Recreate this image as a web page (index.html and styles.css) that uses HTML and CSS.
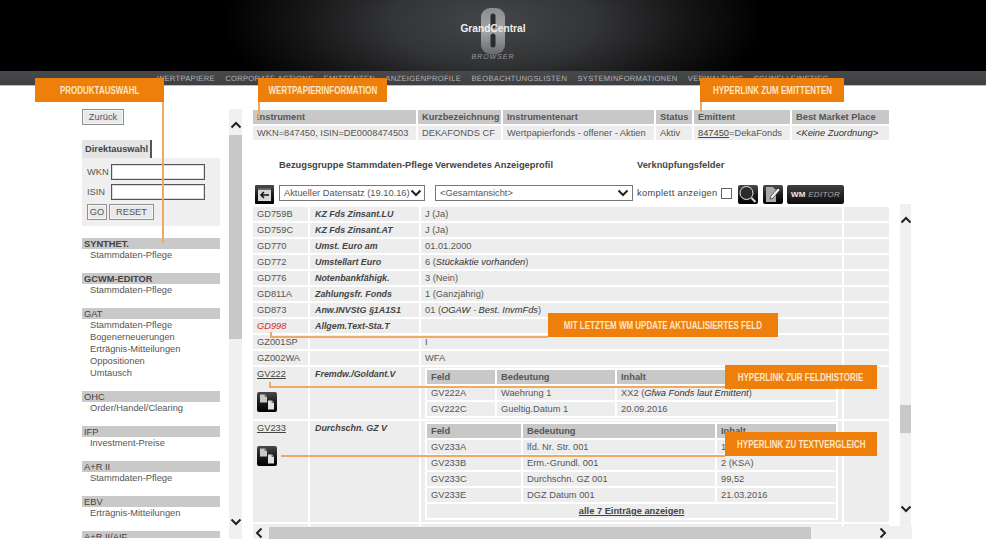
FILE: index.html
```html
<!DOCTYPE html>
<html lang="en">

<head>
  <meta charset="UTF-8">
  <title>GrandCentral Browser</title>
  <link rel="stylesheet" href="styles.css">
</head>

<body>

  <svg class="sprites" width="0" height="0">
    <defs>
      <linearGradient id="tile" x1="0" y1="0" x2="0" y2="1">
        <stop offset="0" stop-color="#4a4a4a" />
        <stop offset="0.5" stop-color="#1c1c1c" />
        <stop offset="1" stop-color="#000" />
      </linearGradient>
      <linearGradient id="mark" x1="0" y1="0" x2="0" y2="1">
        <stop offset="0" stop-color="#8c8d90" />
        <stop offset="0.5" stop-color="#a5a6a8" />
        <stop offset="1" stop-color="#6a6b6e" />
      </linearGradient>
      <symbol id="chevron-up" viewBox="0 0 12 8">
        <path d="M1.5 6.5 6 2l4.500 4.500" fill="none" stroke="#222" stroke-width="2" />
      </symbol>
      <symbol id="chevron-down" viewBox="0 0 12 8">
        <path d="M1.500 1.500 6 6l4.500-4.500" fill="none" stroke="#222" stroke-width="2" />
      </symbol>
      <symbol id="chevron-left" viewBox="0 0 8 12">
        <path d="M6.500 1.500 2 6l4.500 4.500" fill="none" stroke="#222" stroke-width="2" />
      </symbol>
      <symbol id="chevron-right" viewBox="0 0 8 12">
        <path d="M1.500 1.500 6 6l-4.500 4.500" fill="none" stroke="#222" stroke-width="2" />
      </symbol>
      <symbol id="docs" viewBox="0 0 20 20">
        <rect width="20" height="20" rx="2" fill="url(#tile)" />
        <path d="M3 2.500h5l2 2v6H3z" fill="#c9c9c9" />
        <path d="M11 8.500h4l2 2v7h-6z" fill="#e0e0e0" />
        <path d="M8 2.500v2h2M15 8.500v2h2" fill="none" stroke="#666" />
      </symbol>
    </defs>
  </svg>

  <header class="masthead">
    <div class="logo">
      <svg class="logo-mark" width="24" height="46" viewBox="0 0 24 46">
        <rect width="24" height="46" rx="9" fill="url(#mark)" />
        <path d="M12 8v10M12 28v9" stroke="#2b2c2e" stroke-width="5" stroke-linecap="round" />
      </svg>
      <span class="logo-name">GrandCentral</span>
      <span class="logo-sub">BROWSER</span>
    </div>
  </header>

  <nav class="topnav">
    <a>WERTPAPIERE</a>
    <a>CORPORATE ACTIONS</a>
    <a>EMITTENTEN</a>
    <a>ANZEIGENPROFILE</a>
    <a>BEOBACHTUNGSLISTEN</a>
    <a>SYSTEMINFORMATIONEN</a>
    <a>VERWALTUNG</a>
    <a>SCHNELLEINSTIEG</a>
  </nav>

  <main class="workspace">

    <aside class="sidebar">
      <button class="btn btn-back">Zurück</button>

      <div class="tab">Direktauswahl</div>
      <form class="quick">
        <label class="quick-row">WKN <input class="quick-input" type="text"></label>
        <label class="quick-row">ISIN <input class="quick-input" type="text"></label>
        <div class="quick-btns">
          <button class="btn btn-go" type="button">GO</button>
          <button class="btn btn-reset" type="button">RESET</button>
        </div>
      </form>

      <section class="menu">
        <h4 class="menu-head strong">SYNTHET.</h4>
        <a class="menu-item">Stammdaten-Pflege</a>
      </section>
      <section class="menu">
        <h4 class="menu-head strong">GCWM-EDITOR</h4>
        <a class="menu-item">Stammdaten-Pflege</a>
      </section>
      <section class="menu">
        <h4 class="menu-head">GAT</h4>
        <a class="menu-item">Stammdaten-Pflege</a>
        <a class="menu-item">Bogenerneuerungen</a>
        <a class="menu-item">Erträgnis-Mitteilungen</a>
        <a class="menu-item">Oppositionen</a>
        <a class="menu-item">Umtausch</a>
      </section>
      <section class="menu">
        <h4 class="menu-head">OHC</h4>
        <a class="menu-item">Order/Handel/Clearing</a>
      </section>
      <section class="menu">
        <h4 class="menu-head">IFP</h4>
        <a class="menu-item">Investment-Preise</a>
      </section>
      <section class="menu">
        <h4 class="menu-head">A+R II</h4>
        <a class="menu-item">Stammdaten-Pflege</a>
      </section>
      <section class="menu">
        <h4 class="menu-head">EBV</h4>
        <a class="menu-item">Erträgnis-Mitteilungen</a>
      </section>
      <section class="menu">
        <h4 class="menu-head">A+R II/AIF</h4>
      </section>
    </aside>

    <div class="vscroll vscroll-side">
      <svg class="arrow arrow-up" width="12" height="8"><use href="#chevron-up" /></svg>
      <div class="thumb thumb-side"></div>
      <svg class="arrow arrow-down" width="12" height="8"><use href="#chevron-down" /></svg>
    </div>

    <div class="content">

      <table class="grid summary">
        <colgroup>
          <col class="s1"><col class="s2"><col class="s3"><col class="s4"><col class="s5"><col class="s6">
        </colgroup>
        <tr>
          <th>Instrument</th>
          <th>Kurzbezeichnung</th>
          <th>Instrumentenart</th>
          <th>Status</th>
          <th>Emittent</th>
          <th>Best Market Place</th>
        </tr>
        <tr>
          <td>WKN=847450, ISIN=DE0008474503</td>
          <td>DEKAFONDS CF</td>
          <td>Wertpapierfonds - offener - Aktien</td>
          <td>Aktiv</td>
          <td><a class="link">847450</a>=DekaFonds</td>
          <td class="em-dark">&lt;Keine Zuordnung&gt;</td>
        </tr>
      </table>

      <div class="captions">
        <span class="cap-group">Bezugsgruppe Stammdaten-Pflege</span>
        <span class="cap-profile">Verwendetes Anzeigeprofil</span>
        <span>Verknüpfungsfelder</span>
      </div>

      <div class="toolbar">
        <svg class="tool tool-back" width="19" height="19" viewBox="0 0 19 19">
          <rect width="19" height="19" rx="1" fill="url(#tile)" />
          <rect x="3" y="3" width="13" height="13" fill="#d8d8d8" />
          <rect x="3" y="3" width="13" height="2" fill="#666" />
          <path d="M14 10H6M9 7 6 10l3 3" fill="none" stroke="#111" stroke-width="1.500" />
        </svg>
        <div class="select select-data">
          <span>Aktueller Datensatz (19.10.16)</span>
          <svg width="12" height="8"><use href="#chevron-down" /></svg>
        </div>
        <div class="select select-view">
          <span>&lt;Gesamtansicht&gt;</span>
          <svg width="12" height="8"><use href="#chevron-down" /></svg>
        </div>
        <label class="complete">komplett anzeigen <input class="check" type="checkbox"></label>
        <svg class="tool tool-search" width="20" height="19" viewBox="0 0 20 19">
          <rect width="20" height="19" rx="2" fill="url(#tile)" />
          <circle cx="8.500" cy="8" r="6.500" fill="#2c2c2c" stroke="#e6e6e6" stroke-width="1" />
          <path d="m13.500 13 4 4" stroke="#ddd" stroke-width="2" />
        </svg>
        <svg class="tool tool-edit" width="20" height="19" viewBox="0 0 20 19">
          <rect width="20" height="19" rx="2" fill="url(#tile)" />
          <path d="M3 2h7l3 3v12H3z" fill="#a9a9a9" />
          <path d="m7 14 1-3 7-8 2 2-7 8z" fill="#f2f2f2" stroke="#222" stroke-width="0.600" />
        </svg>
        <button class="wm-btn"><b>WM</b> <i>EDITOR</i></button>
      </div>

      <div class="table-area">
        <div class="pane">
          <table class="grid fields">
            <colgroup>
              <col class="f1"><col class="f2"><col class="f3"><col class="f4">
            </colgroup>
            <tr><td>GD759B</td><td class="name">KZ Fds Zinsant.LU</td><td>J (Ja)</td><td></td></tr>
            <tr><td>GD759C</td><td class="name">KZ Fds Zinsant.AT</td><td>J (Ja)</td><td></td></tr>
            <tr><td>GD770</td><td class="name">Umst. Euro am</td><td>01.01.2000</td><td></td></tr>
            <tr><td>GD772</td><td class="name">Umstellart Euro</td><td>6 (<span class="em-dark">Stückaktie vorhanden</span>)</td><td></td></tr>
            <tr><td>GD776</td><td class="name">Notenbankfähigk.</td><td>3 (Nein)</td><td></td></tr>
            <tr><td>GD811A</td><td class="name">Zahlungsfr. Fonds</td><td>1 (Ganzjährig)</td><td></td></tr>
            <tr><td>GD873</td><td class="name">Anw.INVStG §1A1S1</td><td>01 (<span class="em-dark">OGAW - Best. InvmFds</span>)</td><td></td></tr>
            <tr><td class="updated">GD998</td><td class="name">Allgem.Text-Sta.T</td><td></td><td></td></tr>
            <tr><td>GZ001SP</td><td class="name"></td><td>I</td><td></td></tr>
            <tr><td>GZ002WA</td><td class="name"></td><td>WFA</td><td></td></tr>
            <tr class="row-short">
              <td><a class="link">GV222</a><svg class="doc-icon" width="20" height="20"><use href="#docs" /></svg></td>
              <td class="name">Fremdw./Goldant.V</td>
              <td class="nest-cell">
                <table class="grid nested nested-a">
                  <colgroup><col class="na1"><col class="na2"><col class="na3"></colgroup>
                  <tr><th>Feld</th><th>Bedeutung</th><th>Inhalt</th></tr>
                  <tr><td>GV222A</td><td>Waehrung 1</td><td>XX2 (<span class="em-dark">Gfwa Fonds laut Emittent</span>)</td></tr>
                  <tr><td>GV222C</td><td>Gueltig.Datum 1</td><td>20.09.2016</td></tr>
                </table>
              </td>
              <td></td>
            </tr>
            <tr class="row-tall">
              <td><a class="link">GV233</a><svg class="doc-icon" width="20" height="20"><use href="#docs" /></svg></td>
              <td class="name">Durchschn. GZ V</td>
              <td class="nest-cell">
                <table class="grid nested nested-b">
                  <colgroup><col class="nb1"><col class="nb2"><col class="nb3"></colgroup>
                  <tr><th>Feld</th><th>Bedeutung</th><th>Inhalt</th></tr>
                  <tr><td>GV233A</td><td>lfd. Nr. Str. 001</td><td>1</td></tr>
                  <tr><td>GV233B</td><td>Erm.-Grundl. 001</td><td>2 (KSA)</td></tr>
                  <tr><td>GV233C</td><td>Durchschn. GZ 001</td><td>99,52</td></tr>
                  <tr><td>GV233E</td><td>DGZ Datum 001</td><td>21.03.2016</td></tr>
                  <tr><td class="show-all" colspan="3"><a class="link">alle 7 Einträge anzeigen</a></td></tr>
                </table>
              </td>
              <td></td>
            </tr>
            <tr><td></td><td></td><td></td><td></td></tr>
          </table>
        </div>
        <div class="vscroll vscroll-main">
          <svg class="arrow arrow-up" width="12" height="8"><use href="#chevron-up" /></svg>
          <div class="thumb thumb-main"></div>
          <svg class="arrow arrow-down" width="12" height="8"><use href="#chevron-down" /></svg>
        </div>
      </div>

      <div class="hscroll">
        <svg class="arrow-h" width="8" height="12"><use href="#chevron-left" /></svg>
        <div class="thumb-h"></div>
        <svg class="arrow-h arrow-h-end" width="8" height="12"><use href="#chevron-right" /></svg>
      </div>

    </div>
  </main>

  <!-- annotations over the screenshot -->
  <div class="leader v-produkt"></div>
  <div class="leader v-wp"></div>
  <div class="leader v-emittent"></div>
  <div class="leader v-gd998"></div>
  <div class="leader h-gd998"></div>
  <div class="leader v-gv222"></div>
  <div class="leader h-gv222"></div>
  <div class="leader h-gv233"></div>

  <div class="callout c-produkt"><span>PRODUKTAUSWAHL</span></div>
  <div class="callout c-wp"><span>WERTPAPIERINFORMATION</span></div>
  <div class="callout c-emittent"><span>HYPERLINK ZUM EMITTENTEN</span></div>
  <div class="callout c-update"><span>MIT LETZTEM WM UPDATE AKTUALISIERTES FELD</span></div>
  <div class="callout c-historie"><span>HYPERLINK ZUR FELDHISTORIE</span></div>
  <div class="callout c-vergleich"><span>HYPERLINK ZU TEXTVERGLEICH</span></div>

</body>

</html>
```

FILE: styles.css
```css
* {
  box-sizing: border-box;
}

body {
  position: relative;
  margin: 0;
  height: 559px;
  overflow: hidden;
  background-color: #fff;
  font-family: "Liberation Sans", Arial, sans-serif;
  font-size: 9.3px;
  color: #555;
}

.sprites {
  position: absolute;
}

/* header */
.masthead {
  display: flex;
  justify-content: center;
  height: 71px;
  background: radial-gradient(ellipse 270px 110px at 50% 30%, #454649 0%, #333436 38%, #151516 72%, #000 100%);
}

.logo {
  position: relative;
  display: flex;
  flex-direction: column;
  align-items: center;
  width: 70px;
}

.logo-mark {
  position: absolute;
  top: 8px;
  left: 23px;
}

.logo-name {
  position: relative;
  margin-top: 23px;
  font-size: 10.200px;
  line-height: 12px;
  font-weight: bold;
  color: #eee;
}

.logo-sub {
  margin-top: 17px;
  font-size: 7px;
  line-height: 9px;
  font-style: italic;
  letter-spacing: 1px;
  color: #999;
}

.topnav {
  display: flex;
  gap: 10.300px;
  height: 15px;
  padding-left: 157px;
  background: linear-gradient(#47494c, #3d3f42);
  border-bottom: 1px solid #e5b77e;
  font-size: 7.600px;
  line-height: 15px;
  letter-spacing: 0.3px;
  color: #b5b5b5;
  text-rendering: geometricPrecision;
}

/* page body */
.workspace {
  display: flex;
  height: 453px;
  padding-left: 82px;
  overflow: hidden;
}

.sidebar {
  flex: none;
  width: 138px;
  padding-top: 23px;
  height: 452px;
  overflow: hidden;
}

.btn {
  display: block;
  height: 16px;
  padding: 0;
  background-color: #e9e9e9;
  border: 1px solid #8f8f8f;
  box-shadow: inset 0 0 0 1px #f6f6f6;
  font: inherit;
  color: #555;
}

.btn-back {
  width: 42px;
}

.tab {
  width: 70px;
  height: 18px;
  margin-top: 15px;
  padding-left: 3px;
  background-color: #e4e4e4;
  border-right: 2px solid #555;
  font-weight: bold;
  line-height: 18px;
  color: #444;
}

.quick {
  height: 68px;
  padding: 6px 0 0 5px;
  background-color: #efefef;
}

.quick-row {
  display: flex;
  justify-content: space-between;
  align-items: center;
  width: 118px;
  height: 16px;
  margin-bottom: 4px;
}

.quick-input {
  width: 94px;
  height: 16px;
  padding: 0;
  background-color: #fff;
  border: 1px solid #555;
  box-shadow: inset 0 0 0 1px #ddd;
}

.quick-btns {
  display: flex;
  gap: 2px;
}

.btn-go {
  width: 20px;
}

.btn-reset {
  width: 45px;
}

.menu {
  margin-top: 12px;
}

.menu + .menu {
  margin-top: 0;
  padding-top: 12px;
}

.menu-head {
  height: 11px;
  margin: 0;
  padding-left: 2px;
  background-color: #c9c9c9;
  font-size: inherit;
  font-weight: normal;
  line-height: 12px;
  color: #444;
}

.menu-head.strong {
  font-weight: bold;
}

.menu-item {
  display: block;
  padding-left: 8px;
  line-height: 12px;
}

/* scrollbars */
.vscroll {
  display: flex;
  flex-direction: column;
  align-items: center;
  flex: none;
  background-color: #f0f0f0;
}

.vscroll-side {
  width: 13px;
  height: 430px;
  margin: 23px 11px 0 9px;
}

.vscroll-main {
  width: 11px;
  height: 322px;
  margin-top: -1px;
  margin-left: 11px;
}

.arrow {
  flex: none;
}

.arrow-up {
  margin-top: 12px;
}

.arrow-down {
  margin-top: auto;
  margin-bottom: 13px;
}

.thumb {
  flex: none;
  width: 100%;
  background-color: #c8c8c8;
}

.thumb-side {
  height: 204px;
  margin-top: 6px;
}

.thumb-main {
  height: 28px;
  margin-top: 181px;
}

.hscroll {
  display: flex;
  align-items: center;
  width: 659px;
  height: 13px;
  background-color: #f0f0f0;
}

.arrow-h {
  flex: none;
  margin-left: 2px;
}

.thumb-h {
  flex: none;
  width: 542px;
  height: 12px;
  margin-left: 6px;
  background-color: #c8c8c8;
}

.arrow-h-end {
  margin-left: 68px;
}

/* tables */
.content {
  flex: none;
  width: 659px;
  padding-top: 22px;
}

.grid {
  border-collapse: separate;
  border-spacing: 2px;
  table-layout: fixed;
  font-size: inherit;
}

.grid th,
.grid td {
  height: 14px;
  padding: 0 4px;
  overflow: hidden;
  white-space: nowrap;
  line-height: 14px;
  text-align: left;
  vertical-align: top;
}

.grid th {
  background-color: #c8c8c8;
  font-weight: bold;
  color: #555;
}

.grid td {
  background-color: #ededed;
}

.summary {
  width: 640px;
  margin-left: -2px;
}

.s1 { width: 163px; }
.s2 { width: 83px; }
.s3 { width: 151px; }
.s4 { width: 36px; }
.s5 { width: 96px; }
.s6 { width: 97px; }

.link {
  color: #444;
  text-decoration: underline;
}

.em-dark {
  font-style: italic;
  color: #333;
}

.captions {
  display: flex;
  height: 12px;
  margin-top: 17px;
  padding-left: 26px;
  font-weight: bold;
  line-height: 12px;
  color: #444;
}

.cap-group {
  width: 156px;
}

.cap-profile {
  width: 202px;
}

.toolbar {
  display: flex;
  align-items: flex-start;
  height: 20px;
  margin-top: 14px;
  padding-left: 2px;
}

.tool {
  flex: none;
}

.select {
  display: flex;
  justify-content: space-between;
  align-items: center;
  flex: none;
  height: 16px;
  padding: 0 3px 0 4px;
  background-color: #fff;
  border: 1px solid #777;
  white-space: nowrap;
}

.select svg {
  flex: none;
}

.select-data {
  width: 146px;
  margin-left: 5px;
}

.select-view {
  width: 198px;
  margin-left: 10px;
}

.complete {
  display: flex;
  align-items: center;
  flex: none;
  width: 95px;
  height: 16px;
  margin-left: 4px;
  letter-spacing: 0.3px;
  white-space: nowrap;
  color: #444;
}

.check {
  appearance: none;
  flex: none;
  width: 11px;
  height: 11px;
  margin: 0 0 0 3px;
  background-color: #fff;
  border: 1px solid #666;
}

.tool-search {
  margin-left: 6px;
}

.tool-edit {
  margin-left: 5px;
}

.wm-btn {
  flex: none;
  width: 57px;
  height: 19px;
  margin-left: 4px;
  padding: 0;
  background: linear-gradient(#3f3f3f, #0c0c0c);
  border: 0;
  border-radius: 2px;
  font: inherit;
  font-size: 8px;
  letter-spacing: 0.3px;
  color: #eee;
}

.wm-btn i {
  color: #aaa;
}

.table-area {
  display: flex;
  height: 321px;
  margin-top: 0;
}

.pane {
  flex: none;
  width: 636px;
  height: 321px;
  overflow: hidden;
}

.fields {
  width: 640px;
  margin-left: -2px;
}

.f1 { width: 55px; }
.f2 { width: 109px; }
.f3 { width: 421px; }
.f4 { width: 45px; }

.fields > tbody > tr > .name {
  padding-left: 5px;
  font-size: 8.900px;
  font-weight: bold;
  font-style: italic;
  color: #444;
}

.fields > tbody > tr > .updated {
  font-style: italic;
  color: #d22b2b;
}

.row-short > td {
  height: 52px;
}

.row-tall > td {
  height: 101px;
}

.doc-icon {
  display: block;
  margin-top: 11px;
}

.grid .nest-cell {
  padding: 1px 4px 0;
}

.nested {
  width: 413px;
  background-color: #fff;
}

.na1 { width: 68px; }
.na2 { width: 118px; }
.na3 { width: 219px; }

.nb1 { width: 94px; }
.nb2 { width: 192px; }
.nb3 { width: 119px; }

.grid .show-all {
  text-align: center;
}

.show-all .link {
  font-weight: bold;
}

/* orange callouts */
.callout {
  position: absolute;
  display: flex;
  justify-content: center;
  align-items: center;
  height: 24px;
  background-color: #ee7f0b;
  font-size: 10px;
  font-weight: bold;
  white-space: nowrap;
  color: #fde6c6;
}

/* no narrow face installed, so squeeze the bold one */
.callout span {
  flex: none;
  transform: scaleX(0.8);
}

.c-produkt { left: 35px; top: 78px; width: 129px; }
.c-wp { left: 258px; top: 78px; width: 129px; }
.c-emittent { left: 700px; top: 78px; width: 144px; }
.c-update { left: 548px; top: 313px; width: 230px; }
.c-historie { left: 725px; top: 365px; width: 152px; }
.c-vergleich { left: 725px; top: 432px; width: 152px; }

.leader {
  position: absolute;
  background-color: #ecaa62;
}

.v-produkt { left: 162px; top: 102px; width: 2px; height: 141px; }
.v-wp { left: 258px; top: 102px; width: 2px; height: 17px; }
.v-emittent { left: 700px; top: 102px; width: 2px; height: 10px; }
.v-gd998 { left: 270px; top: 332px; width: 2px; height: 5px; }
.h-gd998 { left: 270px; top: 336px; width: 278px; height: 2px; }
.v-gv222 { left: 269px; top: 382px; width: 2px; height: 5px; }
.h-gv222 { left: 269px; top: 386px; width: 456px; height: 2px; }
.h-gv233 { left: 281px; top: 455px; width: 444px; height: 2px; }
```
